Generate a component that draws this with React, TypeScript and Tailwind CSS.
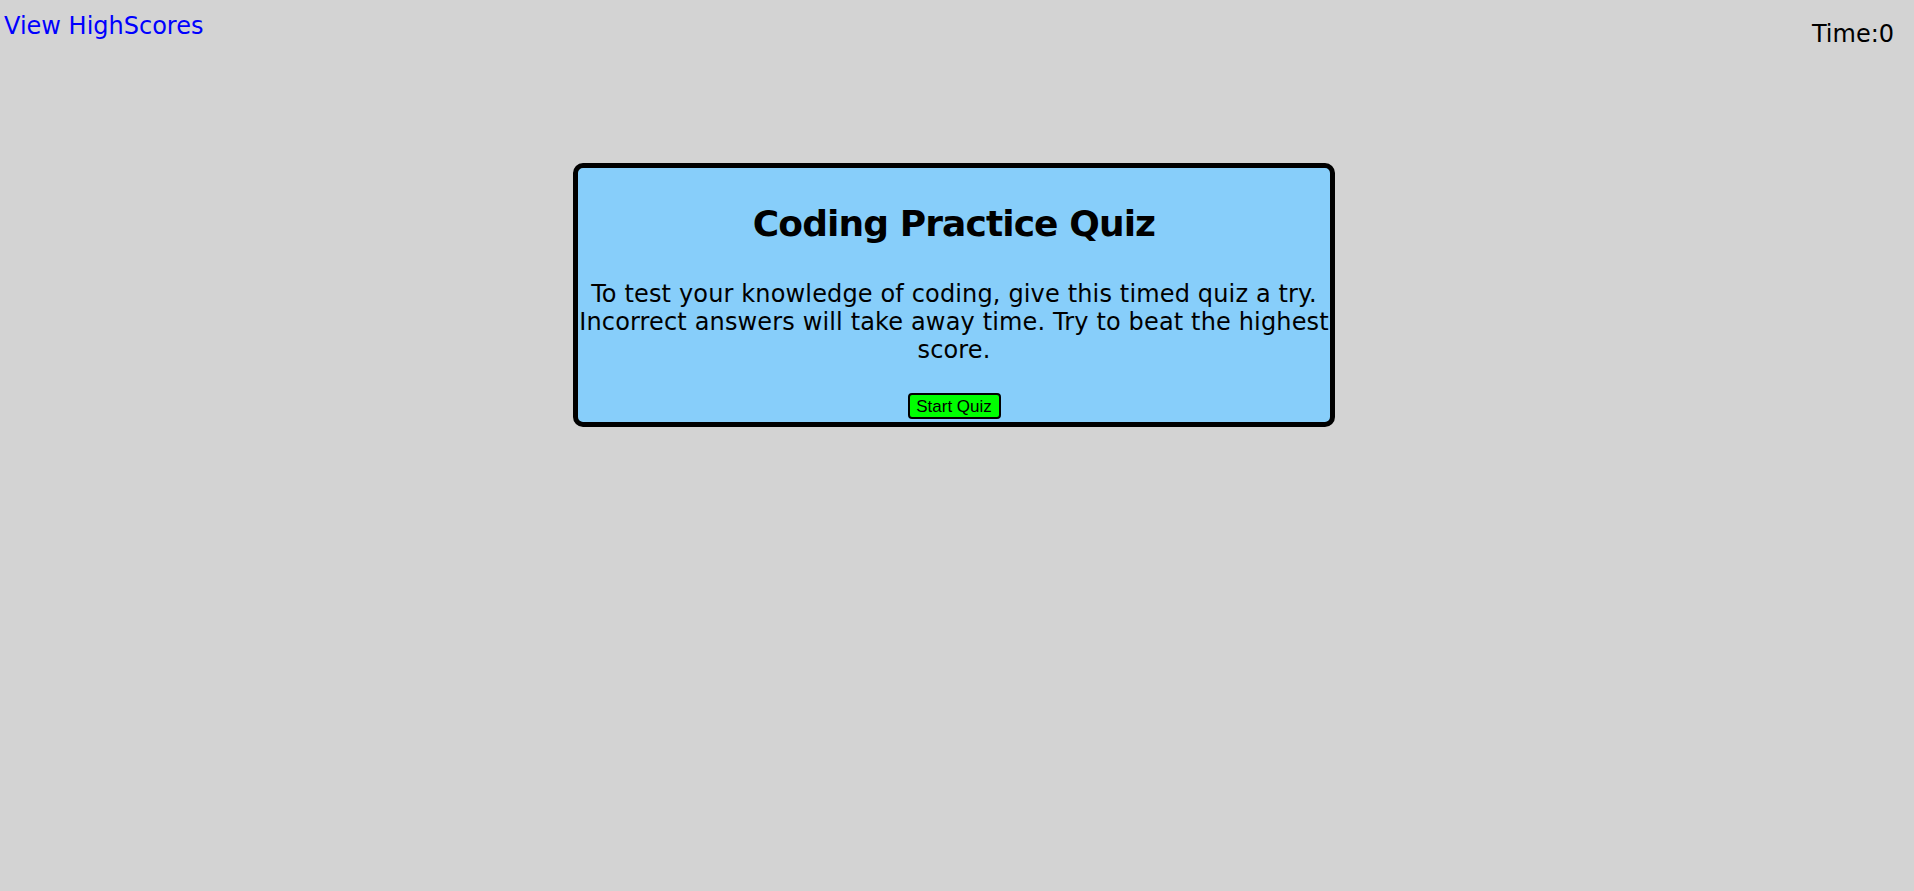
export default function App() {
  return (
    <div className="min-h-[891px] bg-[#d3d3d3] font-['DejaVu_Sans',sans-serif] text-black">
      <header className="flex items-start justify-between">
        <a href="#" className="mt-[12px] ml-[4px] text-[24px] leading-[28px] text-[#0000ff]">
          View HighScores
        </a>
        <div className="mt-[20px] mr-[20px] text-[24px] leading-[28px]">Time:0</div>
      </header>

      <main className="flex justify-center pr-[6px] pt-[115px]">
        <section className="flex w-[762px] flex-col items-center rounded-[10px] border-[5px] border-black bg-[#87cefa] pt-[35px] pb-[3px] text-center">
          <h1 className="text-[36px] leading-[42px] font-bold tracking-[-0.9px]">Coding Practice Quiz</h1>
          <p className="mt-[35px] text-[24px] leading-[28px] tracking-[0.15px] whitespace-nowrap">
            To test your knowledge of coding, give this timed quiz a try.
            <br />
            Incorrect answers will take away time. Try to beat the highest
            <br />
            score.
          </p>
          <button className="mt-[29px] h-[26px] w-[93px] rounded-[4px] border-2 border-black bg-[#00ff00] font-['Liberation_Sans',sans-serif] text-[17px] leading-none">
            Start Quiz
          </button>
        </section>
      </main>
    </div>
  )
}
